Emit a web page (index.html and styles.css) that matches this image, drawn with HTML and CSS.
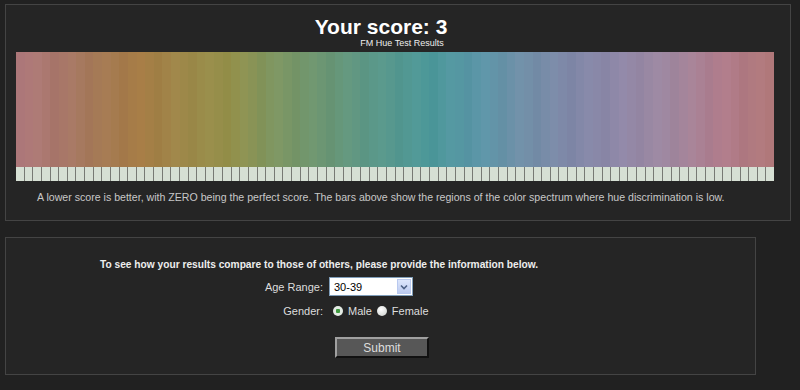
FILE: index.html
```html
<!DOCTYPE html>
<html>
<head>
  <title>FM Hue Test Results</title>
  <link rel="stylesheet" href="styles.css">
</head>
<body>
  <div class="page">
    <div class="panel results">
      <h1 class="score">Your score: 3</h1>
      <div class="subtitle">FM Hue Test Results</div>
      <div class="spectrum">
        <div class="hues" id="hues"></div>
        <div class="caps" id="caps"></div>
      </div>
      <p class="caption">A lower score is better, with ZERO being the perfect score. The bars above show the regions of the color spectrum where hue discrimination is low.</p>
    </div>

    <div class="panel survey">
      <p class="lead">To see how your results compare to those of others, please provide the information below.</p>
      <form class="form">
        <label class="label" for="age">Age Range:</label>
        <div class="select">
          <span class="select-value">30-39</span>
          <span class="select-arrow">
            <svg width="8" height="6" viewBox="0 0 8 6"><path d="M1 1.5 L4 4.5 L7 1.5" fill="none" stroke="#4d6185" stroke-width="1.6"/></svg>
          </span>
        </div>

        <span class="label">Gender:</span>
        <div class="radios">
          <span class="radio checked"></span><span class="radio-text">Male</span>
          <span class="radio"></span><span class="radio-text">Female</span>
        </div>

        <span></span>
        <button type="button" class="submit">Submit</button>
      </form>
    </div>
  </div>

  <script>
    // colour stops sampled along the bar (x offset in px, rgb)
    var stops = [
      [0, [176, 122, 126]], [44, [168, 119, 106]], [84, [165, 122, 85]],
      [124, [166, 124, 69]], [174, [156, 138, 74]], [214, [148, 144, 74]],
      [254, [128, 150, 96]], [304, [108, 150, 114]], [354, [92, 152, 136]],
      [414, [76, 152, 154]], [464, [92, 150, 168]], [504, [112, 144, 168]],
      [554, [128, 136, 168]], [604, [144, 136, 168]], [654, [160, 136, 160]],
      [704, [176, 124, 140]], [757, [176, 120, 120]]
    ];
    var count = 88, width = 757;

    function colourAt(x) {
      for (var i = 1; i < stops.length; i++) {
        if (x <= stops[i][0]) {
          var a = stops[i - 1], b = stops[i];
          var t = (x - a[0]) / (b[0] - a[0]);
          return a[1].map(function (v, k) { return Math.round(v + (b[1][k] - v) * t); });
        }
      }
      return stops[stops.length - 1][1];
    }

    var hues = document.getElementById('hues');
    var caps = document.getElementById('caps');
    for (var i = 0; i < count; i++) {
      var c = colourAt((i + 0.5) * width / count);
      var shade = (i % 4 === 0) ? -3 : (i % 4 === 2 ? 2 : 0);
      var col = document.createElement('div');
      col.className = 'hue';
      col.style.backgroundColor = 'rgb(' + (c[0] + shade) + ',' + (c[1] + shade) + ',' + (c[2] + shade) + ')';
      hues.appendChild(col);
      var cap = document.createElement('div');
      cap.className = 'cap';
      caps.appendChild(cap);
    }
  </script>
</body>
</html>
```

FILE: styles.css
```css
body {
  margin: 0;
  background-color: #212121;
  font-family: "Liberation Sans", Arial, sans-serif;
  color: #dddddd;
}
.page {
  padding: 4px 0 0 5px;
}
.panel {
  border: 1px solid #444444;
  background-color: #252525;
}
.results {
  width: 784px;
  padding: 10px 0 16px 0;
}
.score {
  margin: 0;
  font-size: 21px;
  line-height: 24px;
  font-weight: bold;
  color: #ffffff;
  text-align: center;
  padding-right: 34px;
}
.subtitle {
  font-size: 9px;
  line-height: 9px;
  color: #eeeeee;
  text-align: center;
  padding-left: 8px;
}
.spectrum {
  margin: 4px 16px 0 10px;
}
.hues {
  display: flex;
  height: 115px;
}
.hue {
  flex: 1;
}
.caps {
  display: flex;
  gap: 1px;
  height: 14px;
  background-color: #777a74;
}
.cap {
  flex: 1;
  background-color: #d6e0d4;
}
.caption {
  margin: 9px 0 0 31px;
  font-size: 10.6px;
  line-height: 14px;
  color: #c8c8c8;
}

.survey {
  width: 749px;
  margin-top: 16px;
  padding: 20px 0 16px 0;
}
.lead {
  margin: 0 0 6px 94px;
  font-size: 10.2px;
  line-height: 13px;
  font-weight: bold;
  color: #eeeeee;
}
.form {
  display: grid;
  grid-template-columns: 222px auto;
  column-gap: 6px;
  row-gap: 9px;
  align-items: center;
  margin-left: 95px;
}
.label {
  text-align: right;
  font-size: 11px;
  color: #dddddd;
}
.select {
  display: flex;
  align-items: center;
  justify-content: space-between;
  width: 82px;
  height: 17px;
  border: 1px solid #7f9db9;
  background-color: #ffffff;
  color: #000000;
  font-size: 11px;
}
.select-value {
  padding-left: 4px;
}
.select-arrow {
  display: flex;
  align-items: center;
  justify-content: center;
  width: 14px;
  height: 15px;
  margin-right: 1px;
  border: 1px solid #b9c9ef;
  box-sizing: border-box;
  background: linear-gradient(#dde6fb, #bccbf0);
}
.radios {
  display: flex;
  align-items: center;
  font-size: 11px;
  color: #dddddd;
}
.radio {
  width: 10px;
  height: 10px;
  border-radius: 50%;
  margin: 0 5px 0 4px;
  background: radial-gradient(circle at 40% 35%, #ffffff, #c8ccc8);
  box-sizing: border-box;
}
.radio.checked {
  background: radial-gradient(circle, #3f9a3f 0 2px, #e4ebe4 2.5px);
}
.radio-text {
  margin-right: 1px;
}
.submit {
  width: 94px;
  height: 21px;
  margin: 11px 0 0 6px;
  padding: 0;
  background-color: #575757;
  border: 2px solid;
  border-color: #a0a0a0 #111111 #111111 #a0a0a0;
  color: #dddddd;
  font-family: "Liberation Sans", Arial, sans-serif;
  font-size: 12px;
}
```
